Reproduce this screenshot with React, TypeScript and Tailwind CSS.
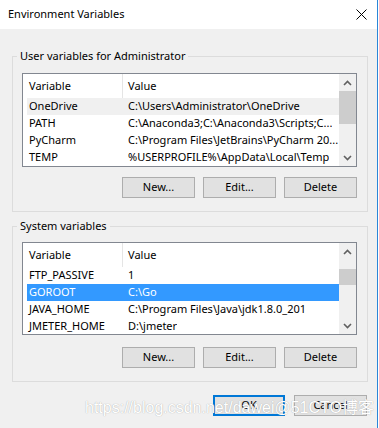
const font = { fontFamily: '"Noto Sans", "Liberation Sans", sans-serif' };

type Row = { name: string; value: string };

const userVars: Row[] = [
  { name: "OneDrive", value: "C:\\Users\\Administrator\\OneDrive" },
  { name: "PATH", value: "C:\\Anaconda3;C:\\Anaconda3\\Scripts;C..." },
  { name: "PyCharm", value: "C:\\Program Files\\JetBrains\\PyCharm 20..." },
  { name: "TEMP", value: "%USERPROFILE%\\AppData\\Local\\Temp" },
];

const systemVars: Row[] = [
  { name: "FTP_PASSIVE", value: "1" },
  { name: "GOROOT", value: "C:\\Go" },
  { name: "JAVA_HOME", value: "C:\\Program Files\\Java\\jdk1.8.0_201" },
  { name: "JMETER_HOME", value: "D:\\jmeter" },
];

function Chevron({ up }: { up?: boolean }) {
  return (
    <svg width="9" height="6" viewBox="0 0 9 6">
      <polyline
        points={up ? "1,5 4.5,1.5 8,5" : "1,1 4.5,4.5 8,1"}
        fill="none"
        stroke="#606060"
        strokeWidth="1.6"
      />
    </svg>
  );
}

function ScrollBar({ thumbTop, thumbHeight }: { thumbTop: number; thumbHeight: number }) {
  return (
    <div className="w-[17px] h-full bg-[#f0f0f0] flex flex-col">
      <div className="h-[17px] flex items-center justify-center">
        <Chevron up />
      </div>
      <div className="flex-1 relative">
        <div
          className="absolute left-0 right-0 bg-[#cdcdcd]"
          style={{ top: thumbTop, height: thumbHeight }}
        />
      </div>
      <div className="h-[17px] flex items-center justify-center">
        <Chevron />
      </div>
    </div>
  );
}

function VarList({
  rows,
  hover,
  selected,
  height,
  thumbTop,
  thumbHeight,
}: {
  rows: Row[];
  hover?: number;
  selected?: number;
  height: string;
  thumbTop: number;
  thumbHeight: number;
}) {
  return (
    <div className={`ml-[5px] w-[335px] ${height} border border-[#828790] bg-white flex overflow-hidden`}>
      <div className="flex-1 pl-[4px] flex flex-col">
        <div className="h-[24px] flex items-stretch shrink-0">
          <div className="w-[96px] pl-[2px] border-r border-[#e5e5e5] flex items-center">Variable</div>
          <div className="pl-[5px] flex items-center">Value</div>
        </div>
        {rows.map((r, i) => (
          <div
            key={r.name}
            className={`h-[17px] shrink-0 flex items-center pl-[2px] whitespace-nowrap ${
              i === selected ? "bg-[#3399ff] text-white" : i === hover ? "bg-[#f0f0f0]" : ""
            }`}
          >
            <div className="w-[99px]">{r.name}</div>
            <div className="truncate">{r.value}</div>
          </div>
        ))}
      </div>
      <ScrollBar thumbTop={thumbTop} thumbHeight={thumbHeight} />
    </div>
  );
}

function Btn({ label, primary }: { label: string; primary?: boolean }) {
  return (
    <button
      className={`h-[21px] flex items-center justify-center bg-[#e1e1e1] ${
        primary ? "w-[72px] border-2 border-[#0078d7]" : "w-[73px] border border-[#adadad]"
      }`}
    >
      {label}
    </button>
  );
}

function Group({ title, children }: { title: string; children: React.ReactNode }) {
  return (
    <fieldset className="ml-3 w-[356px] border border-[#dcdcdc] pl-[4px] pb-[13px]">
      <legend className="px-[3px] leading-[14px]">{title}</legend>
      {children}
    </fieldset>
  );
}

export default function App() {
  return (
    <div className="w-[379px] h-[428px] bg-white text-[11px] text-black relative overflow-hidden" style={font}>
      <div className="w-[378px] h-full border-r border-[#2b86d8] bg-[#f0f0f0] flex flex-col">
        <div className="h-[29px] bg-white flex items-center justify-between pl-2 pr-[10px] shrink-0">
          <span>Environment Variables</span>
          <svg width="11" height="11" viewBox="0 0 11 11">
            <path d="M0.5 0.5 L10.5 10.5 M10.5 0.5 L0.5 10.5" stroke="#000" strokeWidth="1" />
          </svg>
        </div>

        <div className="mt-[20px]">
          <Group title="User variables for Administrator">
            <div className="mt-[10px]">
              <VarList rows={userVars} hover={0} height="h-[94px]" thumbTop={0} thumbHeight={33} />
            </div>
            <div className="mt-[10px] mr-[10px] flex justify-end gap-2">
              <Btn label="New..." />
              <Btn label="Edit..." />
              <Btn label="Delete" />
            </div>
          </Group>
        </div>

        <div className="mt-[7px]">
          <Group title="System variables">
            <div className="mt-[9px]">
              <VarList rows={systemVars} selected={1} height="h-[93px]" thumbTop={9} thumbHeight={16} />
            </div>
            <div className="mt-[12px] mr-[10px] flex justify-end gap-2">
              <Btn label="New..." />
              <Btn label="Edit..." />
              <Btn label="Delete" />
            </div>
          </Group>
        </div>

        <div className="mt-[13px] mr-[10px] flex justify-end gap-[9px]">
          <Btn label="OK" primary />
          <Btn label="Cancel" />
        </div>
      </div>

      <div
        className="absolute left-[85px] top-[396px] text-[16px] text-white whitespace-nowrap pointer-events-none"
        style={{ fontFamily: '"Liberation Sans", "Noto Sans CJK SC", sans-serif', textShadow: "0 0 1px #9a9a9a" }}
      >
        https://blog.csdn.net/dawei@51CTO博客
      </div>
    </div>
  );
}
